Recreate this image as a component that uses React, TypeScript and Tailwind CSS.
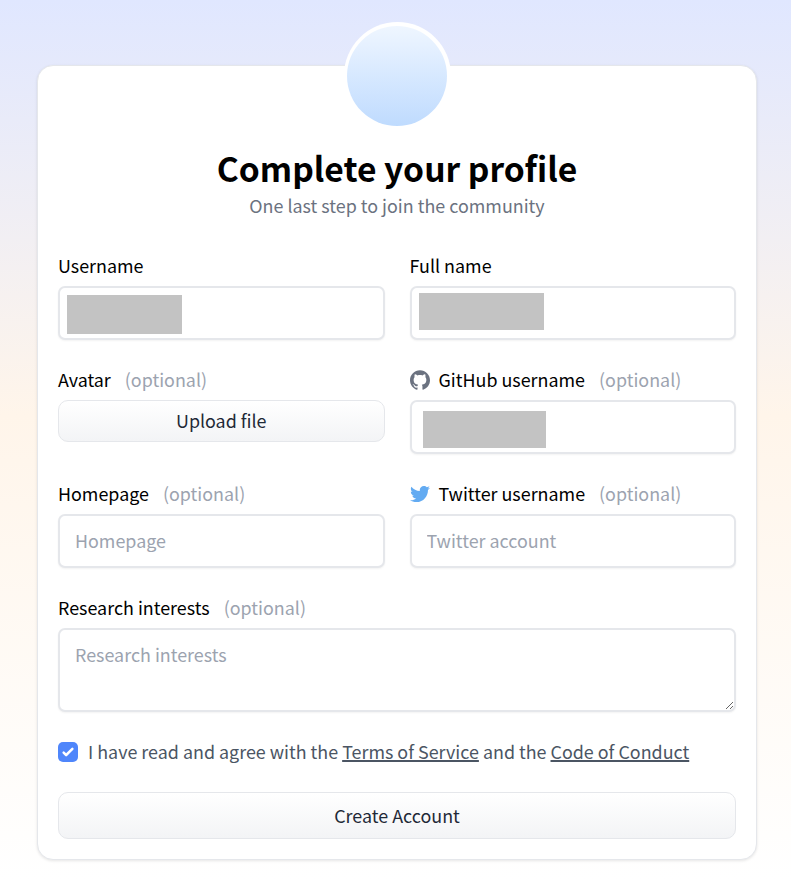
import { ReactNode } from "react";
import { SiGithub } from "react-icons/si";
import { FaTwitter } from "react-icons/fa";

const inputClass =
  "block w-full rounded-[7px] border-2 border-[#e5e7eb] bg-white px-[15px] shadow-[0_1px_2px_rgba(0,0,0,0.05)] outline-none placeholder:text-[#9ca3af] placeholder:opacity-100";

const buttonClass =
  "flex w-full items-center justify-center rounded-[10px] border border-[#e5e7eb] bg-gradient-to-b from-white to-[#f3f4f6] pb-[2px] text-[#1f2937]";

type FieldProps = {
  label: string;
  icon?: ReactNode;
  optional?: boolean;
  children: ReactNode;
};

const Field = ({ label, icon, optional, children }: FieldProps) => (
  <div>
    <div className="flex h-[38px] items-center pb-[4px] whitespace-nowrap">
      {icon}
      <span>{label}</span>
      {optional && <span className="ml-[14px] text-[#9ca3af]">(optional)</span>}
    </div>
    {children}
  </div>
);

const App = () => {
  return (
    <div className="flex h-[894px] w-full flex-col overflow-hidden bg-[linear-gradient(to_bottom,#e0e7ff_0px,#fff5ea_415px,#ffffff_880px)] pt-[65px] pl-[37px] font-['Noto_Sans_CJK_SC','Open_Sans',sans-serif] text-[17.9px] leading-[30px] text-black">
      <div className="relative h-[795px] w-[720px] rounded-[16px] border border-[#e5e7eb] bg-white px-[20px] shadow-[0_1px_3px_rgba(0,0,0,0.1)]">
        <div className="absolute -top-[44px] left-[305.5px] size-[107px] rounded-full bg-white p-[3.5px]">
          <div className="size-full rounded-full bg-gradient-to-b from-[#eff6ff] to-[#bfdbfe]" />
        </div>

        <header className="flex h-[182px] flex-col items-center pt-[82px] text-center">
          <h1 className="text-[33.6px] leading-[40px] font-bold">Complete your profile</h1>
          <p className="leading-[34px] text-[#6b7280]">One last step to join the community</p>
        </header>

        <form className="grid grid-cols-2 gap-x-[25px]">
          <div className="h-[114px]">
            <Field label="Username">
              <div className={`${inputClass} flex h-[54px] items-start !pl-[7px] pt-[7px]`}>
                <div className="h-[39px] w-[115px] bg-[#c3c3c3]" />
              </div>
            </Field>
          </div>
          <div className="h-[114px]">
            <Field label="Full name">
              <div className={`${inputClass} flex h-[54px] items-start !pl-[7px] pt-[5px]`}>
                <div className="h-[37px] w-[125px] bg-[#c3c3c3]" />
              </div>
            </Field>
          </div>
          <div className="h-[114px]">
            <Field label="Avatar" optional>
              <button type="button" className={`${buttonClass} h-[42px]`}>
                Upload file
              </button>
            </Field>
          </div>
          <div className="h-[114px]">
            <Field
              label="GitHub username"
              optional
              icon={<SiGithub className="mt-[2px] mr-[9px] size-[20px] text-[#6b7280]" />}
            >
              <div className={`${inputClass} flex h-[54px] items-start !pl-[11px] pt-[9px]`}>
                <div className="h-[37px] w-[123px] bg-[#c3c3c3]" />
              </div>
            </Field>
          </div>
          <div className="h-[114px]">
            <Field label="Homepage" optional>
              <input className={`${inputClass} h-[54px] pb-[2px]`} placeholder="Homepage" />
            </Field>
          </div>
          <div className="h-[114px]">
            <Field
              label="Twitter username"
              optional
              icon={<FaTwitter className="mt-[2px] mr-[9px] size-[20px] text-[#63abf2]" />}
            >
              <input className={`${inputClass} h-[54px] pb-[2px]`} placeholder="Twitter account" />
            </Field>
          </div>

          <div className="col-span-2">
            <Field label="Research interests" optional>
              <textarea
                className={`${inputClass} h-[84px] resize-y pt-[9px]`}
                placeholder="Research interests"
              />
            </Field>
          </div>

          <label className="col-span-2 mt-[25px] flex h-[30px] items-center whitespace-nowrap text-[#4b5563]">
            <span className="mr-[10px] flex size-[20px] items-center justify-center rounded-[5px] bg-[#4f86fb]">
              <svg viewBox="0 0 16 16" className="size-[20px] fill-white">
                <path d="M12.207 4.793a1 1 0 010 1.414l-5 5a1 1 0 01-1.414 0l-2-2a1 1 0 011.414-1.414L6.5 9.086l4.293-4.293a1 1 0 011.414 0z" />
              </svg>
            </span>
            <span className="pb-[2px]">
              I have read and agree with the{" "}
              <a className="underline decoration-2 underline-offset-[1px]">Terms of Service</a> and the{" "}
              <a className="underline decoration-2 underline-offset-[1px]">Code of Conduct</a>
            </span>
          </label>

          <button type="button" className={`${buttonClass} col-span-2 mt-[25px] h-[47px]`}>
            Create Account
          </button>
        </form>
      </div>
    </div>
  );
};

export default App;
